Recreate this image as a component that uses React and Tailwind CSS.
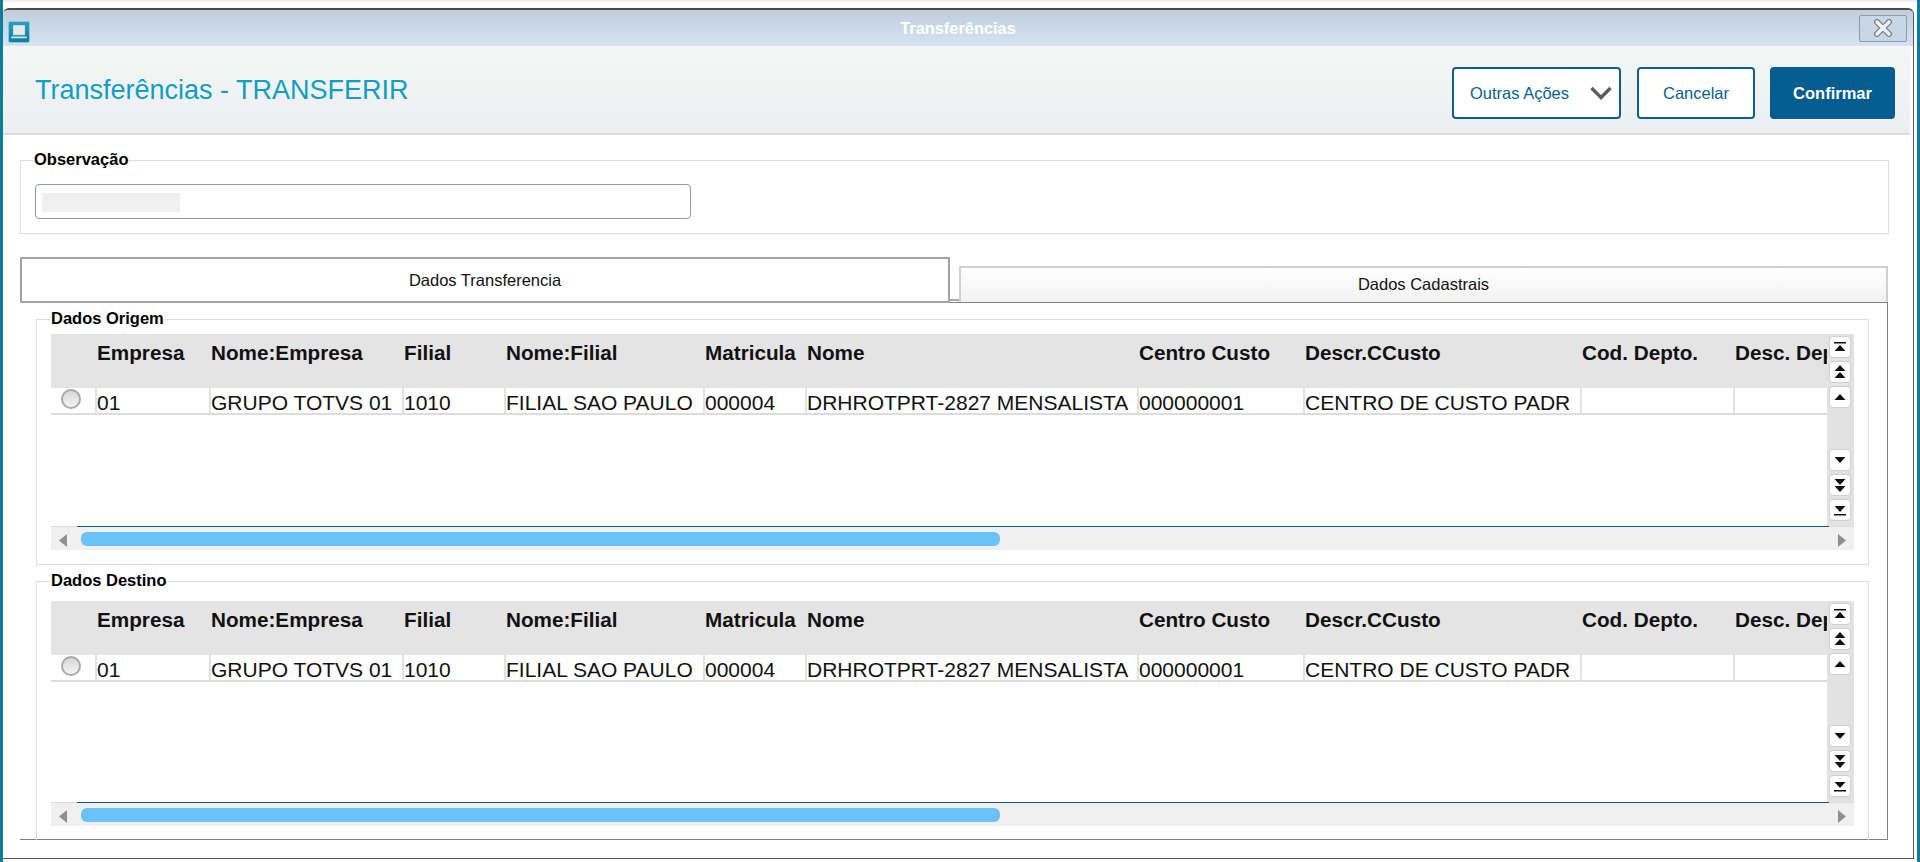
const columns = [
  { width: 'w-[44px]', title: '', value: '' },
  { width: 'w-[114px]', title: 'Empresa', value: '01' },
  { width: 'w-[193px]', title: 'Nome:Empresa', value: 'GRUPO TOTVS 01' },
  { width: 'w-[102px]', title: 'Filial', value: '1010' },
  { width: 'w-[199px]', title: 'Nome:Filial', value: 'FILIAL SAO PAULO' },
  { width: 'w-[102px]', title: 'Matricula', value: '000004' },
  { width: 'w-[332px]', title: 'Nome', value: 'DRHROTPRT-2827 MENSALISTA' },
  { width: 'w-[166px]', title: 'Centro Custo', value: '000000001' },
  { width: 'w-[277px]', title: 'Descr.CCusto', value: 'CENTRO DE CUSTO PADR' },
  { width: 'w-[153px]', title: 'Cod. Depto.', value: '' },
  { width: 'w-[94px]', title: 'Desc. Depto.', value: '' },
];

function ScrollIcon({ type }) {
  const icons = {
    first: (
      <>
        <rect x="5" y="6" width="12" height="1.5" />
        <path d="M11 9 L16.5 15 L5.5 15 Z" />
      </>
    ),
    pageUp: (
      <>
        <path d="M11 4 L16.5 10 L5.5 10 Z" />
        <path d="M11 11 L16.5 17 L5.5 17 Z" />
      </>
    ),
    up: <path d="M11 8 L16.5 14 L5.5 14 Z" />,
    down: <path d="M11 14 L16.5 8 L5.5 8 Z" />,
    pageDown: (
      <>
        <path d="M11 11 L16.5 5 L5.5 5 Z" />
        <path d="M11 18 L16.5 12 L5.5 12 Z" />
      </>
    ),
    last: (
      <>
        <path d="M11 13 L16.5 7 L5.5 7 Z" />
        <rect x="5" y="15" width="12" height="1.5" />
      </>
    ),
  };

  return (
    <div className="h-[22px] w-[22px] rounded-[4px] border border-[#d0d0d0] bg-white">
      <svg viewBox="0 0 22 22" className="-m-px h-[22px] w-[22px]" fill="#111">
        {icons[type]}
      </svg>
    </div>
  );
}

function Grid({ height }) {
  return (
    <div className="flex w-[1803px] flex-col">
      <div className={`flex ${height}`}>
        <div className="w-[1776px] overflow-hidden">
          {/* Header */}
          <div className="flex h-[54px] bg-[#e4e4e4]">
            {columns.map((col, i) => (
              <div
                key={i}
                className={`${col.width} shrink-0 whitespace-nowrap pl-[2px] pt-[6px] text-[20.7px] font-bold leading-[25px] text-[#111]`}
              >
                {col.title}
              </div>
            ))}
          </div>
          {/* Row */}
          <div className="flex h-[27px] border-b-2 border-[#dcdcdc] bg-white">
            {columns.map((col, i) =>
              i === 0 ? (
                <div key={i} className={`${col.width} shrink-0 pl-[10px] pt-px`}>
                  <div className="h-[20px] w-[20px] rounded-full border-2 border-[#a9a9a9] bg-gradient-to-b from-[#d8d8d8] to-[#f4f4f4]" />
                </div>
              ) : (
                <div
                  key={i}
                  className={`${col.width} shrink-0 whitespace-nowrap border-l-2 border-[#e2e2e2] pt-px text-[21px] leading-[27px] text-[#111]`}
                >
                  {col.value}
                </div>
              )
            )}
          </div>
        </div>
        {/* Vertical scroll buttons */}
        <div className="flex w-[27px] flex-col justify-between bg-[#e2e2e2] pb-[5px] pl-[2px] pt-[2px]">
          <div className="flex flex-col gap-[3px]">
            <ScrollIcon type="first" />
            <ScrollIcon type="pageUp" />
            <ScrollIcon type="up" />
          </div>
          <div className="flex flex-col gap-[3px]">
            <ScrollIcon type="down" />
            <ScrollIcon type="pageDown" />
            <ScrollIcon type="last" />
          </div>
        </div>
      </div>
      {/* Horizontal scroll */}
      <div className="flex h-[24px] bg-[#f0f0f0]">
        <div className="w-[26px] border-t border-[#dcdcdc] pl-[8px] pt-[7px]">
          <svg viewBox="0 0 8 13" className="h-[13px] w-[8px]" fill="#8f8f8f">
            <path d="M8 0 L8 13 L0 6.5 Z" />
          </svg>
        </div>
        <div className="w-[1752px] border-t border-[#0a5f94] pl-[4px] pt-[5px]">
          <div className="h-[14px] w-[919px] rounded-[6px] bg-[#6bc1fa]" />
        </div>
        <div className="w-[25px] border-t border-[#dcdcdc] pl-[9px] pt-[7px]">
          <svg viewBox="0 0 8 13" className="h-[13px] w-[8px]" fill="#8f8f8f">
            <path d="M0 0 L0 13 L8 6.5 Z" />
          </svg>
        </div>
      </div>
    </div>
  );
}

export default function App() {
  return (
    <div className="h-[862px] w-[1920px] overflow-hidden border-x-[3px] border-[#0e7c9b] bg-white font-['Liberation_Sans',Arial,sans-serif]">
      <div className="h-[2px] bg-[#f0f0f0]" />

      <div className="mt-[6px] h-[851px] w-[1911px] rounded-t-[6px] border-b border-r border-t-2 border-b-[#555] border-r-[#555] border-t-[#4a4a4a]">
        {/* Title bar */}
        <div className="grid h-[36px] grid-cols-[1fr_auto_1fr] items-center rounded-t-[5px] bg-gradient-to-b from-[#bfcedc] to-[#d6e4f1]">
          <div className="pl-[5px] pt-[8px]">
            <div className="flex h-[22px] w-[22px] items-center justify-center rounded-[2px] border border-[#8cc6da] bg-gradient-to-b from-[#2c9cc0] to-[#0f7fa6]">
              <svg viewBox="0 0 22 22" className="h-[20px] w-[20px]">
                <rect x="5" y="4" width="12" height="10" fill="#e4e8ea" stroke="#cfe6ef" />
                <path d="M3 16 H19 L20 18 H2 Z" fill="#cfe6ef" />
              </svg>
            </div>
          </div>
          <div className="text-[16.4px] font-bold leading-[20px] text-white">Transferências</div>
          <div className="flex justify-end pr-[6px]">
            <div className="flex h-[27px] w-[48px] items-center justify-center rounded-[2px] border border-[#8a9ab0] bg-[#c9d7e4]">
              <svg viewBox="0 0 20 18" className="h-[18px] w-[20px]" fill="none" strokeLinecap="round">
                <path d="M4 3 L16 15 M16 3 L4 15" stroke="#6f7a84" strokeWidth="6" />
                <path d="M4 3 L16 15 M16 3 L4 15" stroke="#f2f2f2" strokeWidth="3.6" />
              </svg>
            </div>
          </div>
        </div>

        {/* Page header */}
        <div className="mr-[3px] flex h-[89px] items-center justify-between border-b-2 border-[#dcdcdc] bg-gradient-to-b from-[#f5f7f6] to-[#eceef0] pl-[32px] pr-[15px]">
          <h1 className="text-[27px] font-normal leading-[32px] text-[#0f9fc0]">Transferências - TRANSFERIR</h1>
          <div className="mt-[6px] flex text-[16.5px] leading-[20px]">
            <div className="flex h-[52px] w-[169px] items-center gap-[21px] rounded-[4px] border-2 border-[#0b5f90] bg-white pl-[16px] text-[#0b5f90]">
              <span>Outras Ações</span>
              <svg viewBox="0 0 22 14" className="h-[14px] w-[22px]" fill="none" stroke="#5e5e5e" strokeWidth="3.4">
                <path d="M1.5 2 L11 11.5 L20.5 2" />
              </svg>
            </div>
            <div className="ml-[16px] flex h-[52px] w-[118px] items-center justify-center rounded-[4px] border-2 border-[#0b5f90] bg-white text-[#0b5f90]">
              Cancelar
            </div>
            <div className="ml-[15px] flex h-[52px] w-[125px] items-center justify-center rounded-[4px] bg-[#055c90] font-bold text-white">
              Confirmar
            </div>
          </div>
        </div>

        <div className="pl-[17px]">
          {/* Observacao */}
          <fieldset className="mt-[18px] h-[81px] w-[1869px] border border-[#dcdcdc] pl-[14px] pr-[14px] pt-[17px]">
            <legend className="-ml-[2px] px-px pb-[2px] text-[16.5px] font-bold leading-[12px] text-black">Observação</legend>
            <div className="h-[35px] w-[656px] rounded-[4px] border border-[#8f9a9a] bg-white pl-[6px] pt-[8px]">
              <div className="h-[19px] w-[138px] bg-[#f0f0f0]" />
            </div>
          </fieldset>

          {/* Tabs */}
          <div className="relative -mb-px mt-[23px] flex h-[46px] items-end">
            <div className="flex h-[46px] w-[930px] items-center justify-center border-2 border-[#a0a2a6] bg-white text-[16.5px] text-[#111]">
              Dados Transferencia
            </div>
            <div className="mb-[2px] h-[2px] w-[9px] bg-[#a8a8a8]" />
            <div className="mb-px flex h-[36px] w-[929px] items-center justify-center border-x-2 border-t-2 border-[#d0d0d0] bg-gradient-to-b from-white to-[#f2f2f2] pb-[2px] text-[16.5px] text-[#111]">
              Dados Cadastrais
            </div>
          </div>

          {/* Panel */}
          <div className="h-[538px] w-[1868px] border-b border-r border-t border-[#7c8088] pl-[16px] pt-[9px]">
            <fieldset className="h-[253px] w-[1833px] border border-[#dcdcdc] pl-[14px] pt-[8px]">
              <legend className="-ml-px px-px pb-[2px] text-[16.5px] font-bold leading-[12px] text-black">Dados Origem</legend>
              <Grid height="h-[192px]" />
            </fieldset>
            <fieldset className="mt-[9px] h-[266px] w-[1833px] border border-b-0 border-[#dcdcdc] pl-[14px] pt-[13px]">
              <legend className="-ml-px px-px pb-[2px] text-[16.5px] font-bold leading-[12px] text-black">Dados Destino</legend>
              <Grid height="h-[201px]" />
            </fieldset>
          </div>
        </div>
      </div>
    </div>
  );
}
